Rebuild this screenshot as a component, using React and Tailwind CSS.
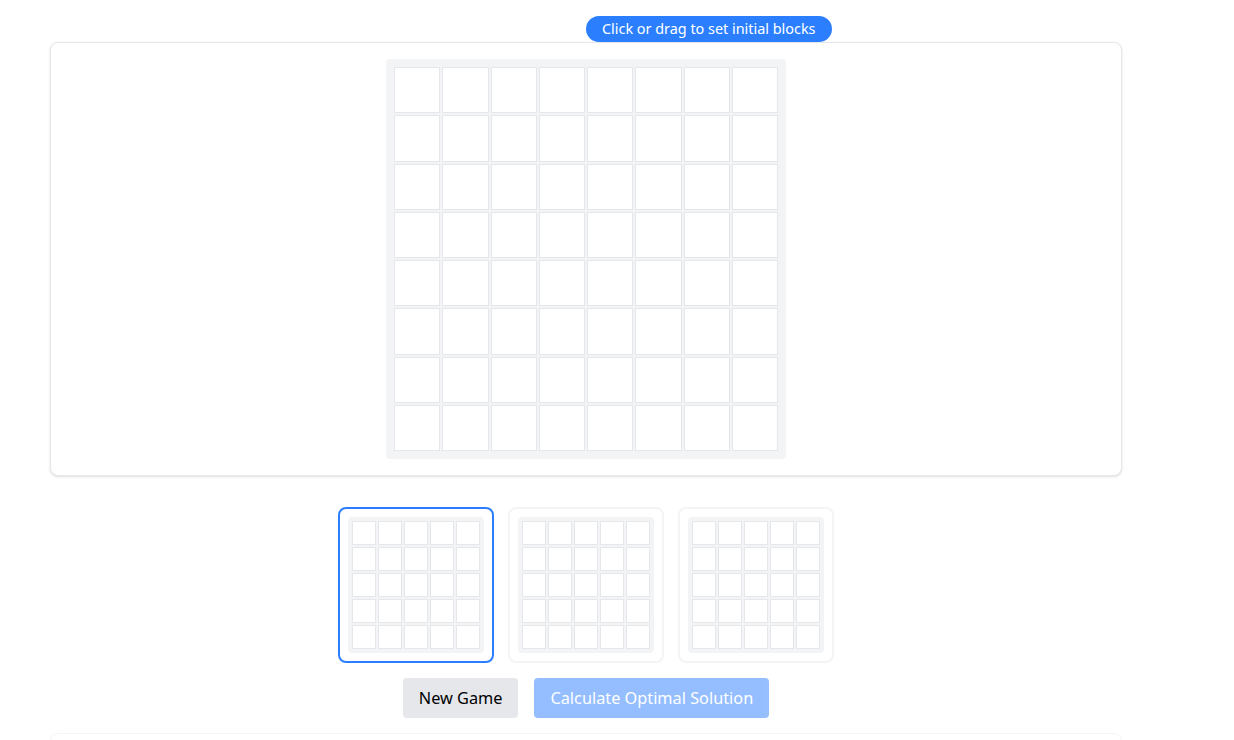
import React, { useState } from "react";

const font = { fontFamily: '"Noto Sans", "Open Sans", Arial, sans-serif' };

const range = (n) => Array.from({ length: n }, (_, i) => i);

function MiniBoard() {
  return (
    <div className="grid grid-cols-5 gap-[2px] rounded bg-gray-100 p-1 w-[136px] h-[136px]">
      {range(25).map((i) => (
        <div key={i} className="w-6 h-6 bg-white border border-gray-200" />
      ))}
    </div>
  );
}

export default function App() {
  const [selected, setSelected] = useState(0);
  const [cells, setCells] = useState(() => range(64).map(() => false));

  const toggle = (i) => setCells((c) => c.map((v, j) => (j === i ? !v : v)));

  return (
    <div className="min-h-screen bg-white pt-[42px] overflow-hidden" style={font}>
      {/* Main board card */}
      <div className="relative ml-[50px] w-[1072px] rounded-lg border border-gray-200 bg-white p-4 shadow-sm">
        <div className="absolute -top-[27px] left-1/2 rounded-full bg-blue-500 px-4 py-[3px] text-[14.4px] leading-5 text-white whitespace-nowrap">
          Click or drag to set initial blocks
        </div>
        <div className="mx-auto grid w-[400px] h-[400px] grid-cols-8 gap-0.5 rounded bg-gray-100 p-2">
          {cells.map((on, i) => (
            <div
              key={i}
              onClick={() => toggle(i)}
              className={`border border-gray-200 ${on ? "bg-blue-500" : "bg-white"}`}
            />
          ))}
        </div>
      </div>

      {/* Piece selectors */}
      <div className="mt-[31px] ml-[50px] w-[1072px] flex justify-center gap-[14px]">
        {range(3).map((i) => (
          <button
            key={i}
            onClick={() => setSelected(i)}
            className={`rounded-lg bg-white p-2 ${
              selected === i ? "border-2 border-blue-500" : "border-2 border-gray-100"
            }`}
          >
            <MiniBoard />
          </button>
        ))}
      </div>

      {/* Actions */}
      <div className="mt-[15px] ml-[50px] w-[1072px] flex justify-center gap-4">
        <button className="rounded bg-gray-200 px-4 py-2 text-[16.3px] leading-6 text-black">New Game</button>
        <button disabled className="rounded bg-blue-500 px-4 py-2 text-[16.3px] leading-6 text-white opacity-50">
          Calculate Optimal Solution
        </button>
      </div>

      <div className="mt-[15px] ml-[50px] w-[1072px] h-40 rounded-lg border border-gray-100 bg-white" />
    </div>
  );
}
